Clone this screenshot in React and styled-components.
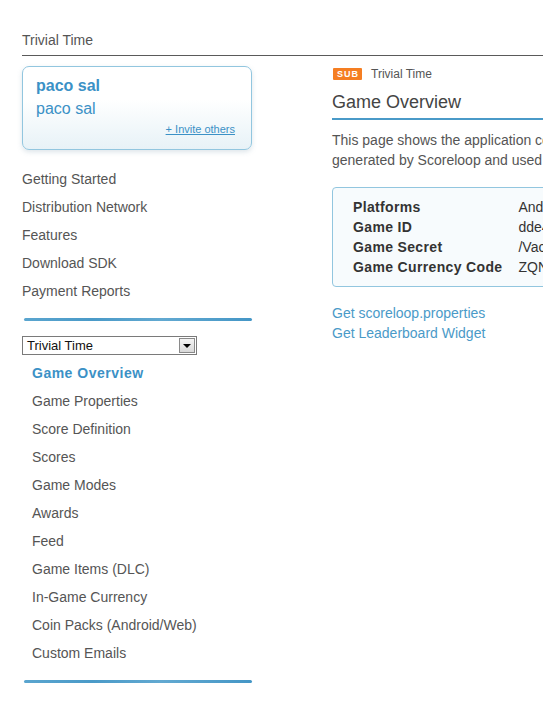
import React from "react"
import styled, { createGlobalStyle } from "styled-components"

const GlobalStyle = createGlobalStyle`
  html, body {
    margin: 0;
    padding: 0;
    background: #fff;
    overflow: hidden;
  }
  body {
    font-family: "Liberation Sans", Arial, sans-serif;
    color: #555;
  }
`

const Page = styled.div`
  width: 960px;
  padding-left: 22px;
`

const TopBar = styled.div`
  padding-top: 32px;
  padding-bottom: 7px;
  font-size: 14px;
  line-height: 16px;
  color: #555;
  border-bottom: 1px solid #5a5a5a;
`

const Columns = styled.div`
  display: flex;
  align-items: flex-start;
  gap: 80px;
  margin-top: 10px;
`

const Sidebar = styled.div`
  width: 230px;
  flex: none;
`

const UserCard = styled.div`
  box-sizing: border-box;
  height: 84px;
  padding: 9px 16px 0 13px;
  border: 1px solid #92c6df;
  border-radius: 7px;
  background: linear-gradient(#ffffff 40%, #e7f2f7);
  box-shadow: 0 2px 5px rgba(120, 150, 170, 0.25);
  display: flex;
  flex-direction: column;
`

const UserName = styled.div`
  font-size: 16px;
  line-height: 20px;
  font-weight: ${p => (p.$bold ? "bold" : "normal")};
  color: #3b91c6;
  ${p => !p.$bold && "margin-top: 3px;"}
`

const InviteLink = styled.a`
  align-self: flex-end;
  margin-top: 4px;
  font-size: 11px;
  color: #3b91c6;
  text-decoration: underline;
`

const NavList = styled.ul`
  list-style: none;
  margin: ${p => p.$top || 0}px 0 0;
  padding: 0 0 0 ${p => p.$indent || 0}px;
`

const NavItem = styled.li`
  font-size: 14px;
  line-height: 28px;
  color: ${p => (p.$active ? "#3b91c6" : "#555")};
  font-weight: ${p => (p.$active ? "bold" : "normal")};
  letter-spacing: ${p => (p.$active ? "0.5px" : "normal")};
  white-space: nowrap;
`

const Divider = styled.div`
  height: 3px;
  margin: ${p => p.$top}px 0 0 2px;
  border-radius: 2px;
  background: linear-gradient(90deg, #5aa5cf, #4a9ac8 30%, #62a9d1 60%, #4496c6);
`

const SelectBox = styled.div`
  box-sizing: border-box;
  margin-top: 15px;
  width: 175px;
  height: 19px;
  border: 1px solid #7a7a7a;
  display: flex;
  align-items: center;
  justify-content: space-between;
  font-size: 13px;
  color: #111;
  padding-left: 4px;
  background: #fff;
`

const SelectArrow = styled.span`
  box-sizing: border-box;
  width: 16px;
  height: 15px;
  margin-right: 1px;
  border: 1px solid #8a8a8a;
  background: linear-gradient(#f4f4f4, #d8d8d8);
  display: flex;
  align-items: center;
  justify-content: center;
  &::after {
    content: "";
    border-left: 4px solid transparent;
    border-right: 4px solid transparent;
    border-top: 4px solid #000;
  }
`

const Main = styled.div`
  width: 440px;
  flex: none;
`

const Crumb = styled.div`
  display: flex;
  align-items: center;
  gap: 9px;
  font-size: 12px;
  line-height: 16px;
  color: #555;
  padding-left: 1px;
`

const Badge = styled.span`
  background: #f57e22;
  color: #fff;
  font-size: 9px;
  font-weight: bold;
  letter-spacing: 1px;
  line-height: 12px;
  padding: 0 3px 0 4px;
  border-radius: 1px;
`

const Title = styled.h1`
  margin: 8px 0 0;
  padding-bottom: 4px;
  font-size: 18px;
  line-height: 24px;
  font-weight: normal;
  color: #444;
  border-bottom: 2px solid #4a9ac8;
`

const Intro = styled.p`
  margin: 10px 0 0;
  font-size: 14px;
  line-height: 20px;
  color: #555;
  width: 330px;
`

const InfoBox = styled.div`
  margin-top: 17px;
  padding: 9px 20px;
  border: 1px solid #92c6df;
  border-radius: 4px;
  background: #f7fbfd;
  display: grid;
  grid-template-columns: auto 1fr;
  column-gap: 16px;
  font-size: 14px;
  line-height: 20px;
`

const InfoLabel = styled.span`
  font-weight: bold;
  letter-spacing: 0.35px;
  color: #333;
  white-space: nowrap;
`

const InfoValue = styled.span`
  color: #333;
  white-space: nowrap;
`

const LinkList = styled.div`
  margin-top: 16px;
  display: flex;
  flex-direction: column;
`

const TextLink = styled.a`
  font-size: 14px;
  line-height: 20px;
  color: #4a9ac8;
  text-decoration: none;
`

const mainNav = [
  "Getting Started",
  "Distribution Network",
  "Features",
  "Download SDK",
  "Payment Reports",
]

const gameNav = [
  "Game Overview",
  "Game Properties",
  "Score Definition",
  "Scores",
  "Game Modes",
  "Awards",
  "Feed",
  "Game Items (DLC)",
  "In-Game Currency",
  "Coin Packs (Android/Web)",
  "Custom Emails",
]

const info = [
  ["Platforms", "Android, iPhone"],
  ["Game ID", "dde4a1c2-7f3b-4e9a-b0d1-2c5e8f6a9b31"],
  ["Game Secret", "/VacQk3Lr8sZp0W2mJtYhX5bN"],
  ["Game Currency Code", "ZQN"],
]

export default function App() {
  return (
    <Page>
      <GlobalStyle />
      <TopBar>Trivial Time</TopBar>
      <Columns>
        <Sidebar>
          <UserCard>
            <UserName $bold>paco sal</UserName>
            <UserName>paco sal</UserName>
            <InviteLink>+ Invite others</InviteLink>
          </UserCard>
          <NavList $top={15}>
            {mainNav.map(item => (
              <NavItem key={item}>{item}</NavItem>
            ))}
          </NavList>
          <Divider $top={13} />
          <SelectBox>
            Trivial Time
            <SelectArrow />
          </SelectBox>
          <NavList $top={4} $indent={10}>
            {gameNav.map((item, i) => (
              <NavItem key={item} $active={i === 0}>
                {item}
              </NavItem>
            ))}
          </NavList>
          <Divider $top={13} />
        </Sidebar>
        <Main>
          <Crumb>
            <Badge>SUB</Badge>
            Trivial Time
          </Crumb>
          <Title>Game Overview</Title>
          <Intro>
            This page shows the application configuration generated by
            Scoreloop and used by your game.
          </Intro>
          <InfoBox>
            {info.map(([label, value]) => (
              <React.Fragment key={label}>
                <InfoLabel>{label}</InfoLabel>
                <InfoValue>{value}</InfoValue>
              </React.Fragment>
            ))}
          </InfoBox>
          <LinkList>
            <TextLink>Get scoreloop.properties</TextLink>
            <TextLink>Get Leaderboard Widget</TextLink>
          </LinkList>
        </Main>
      </Columns>
    </Page>
  )
}
